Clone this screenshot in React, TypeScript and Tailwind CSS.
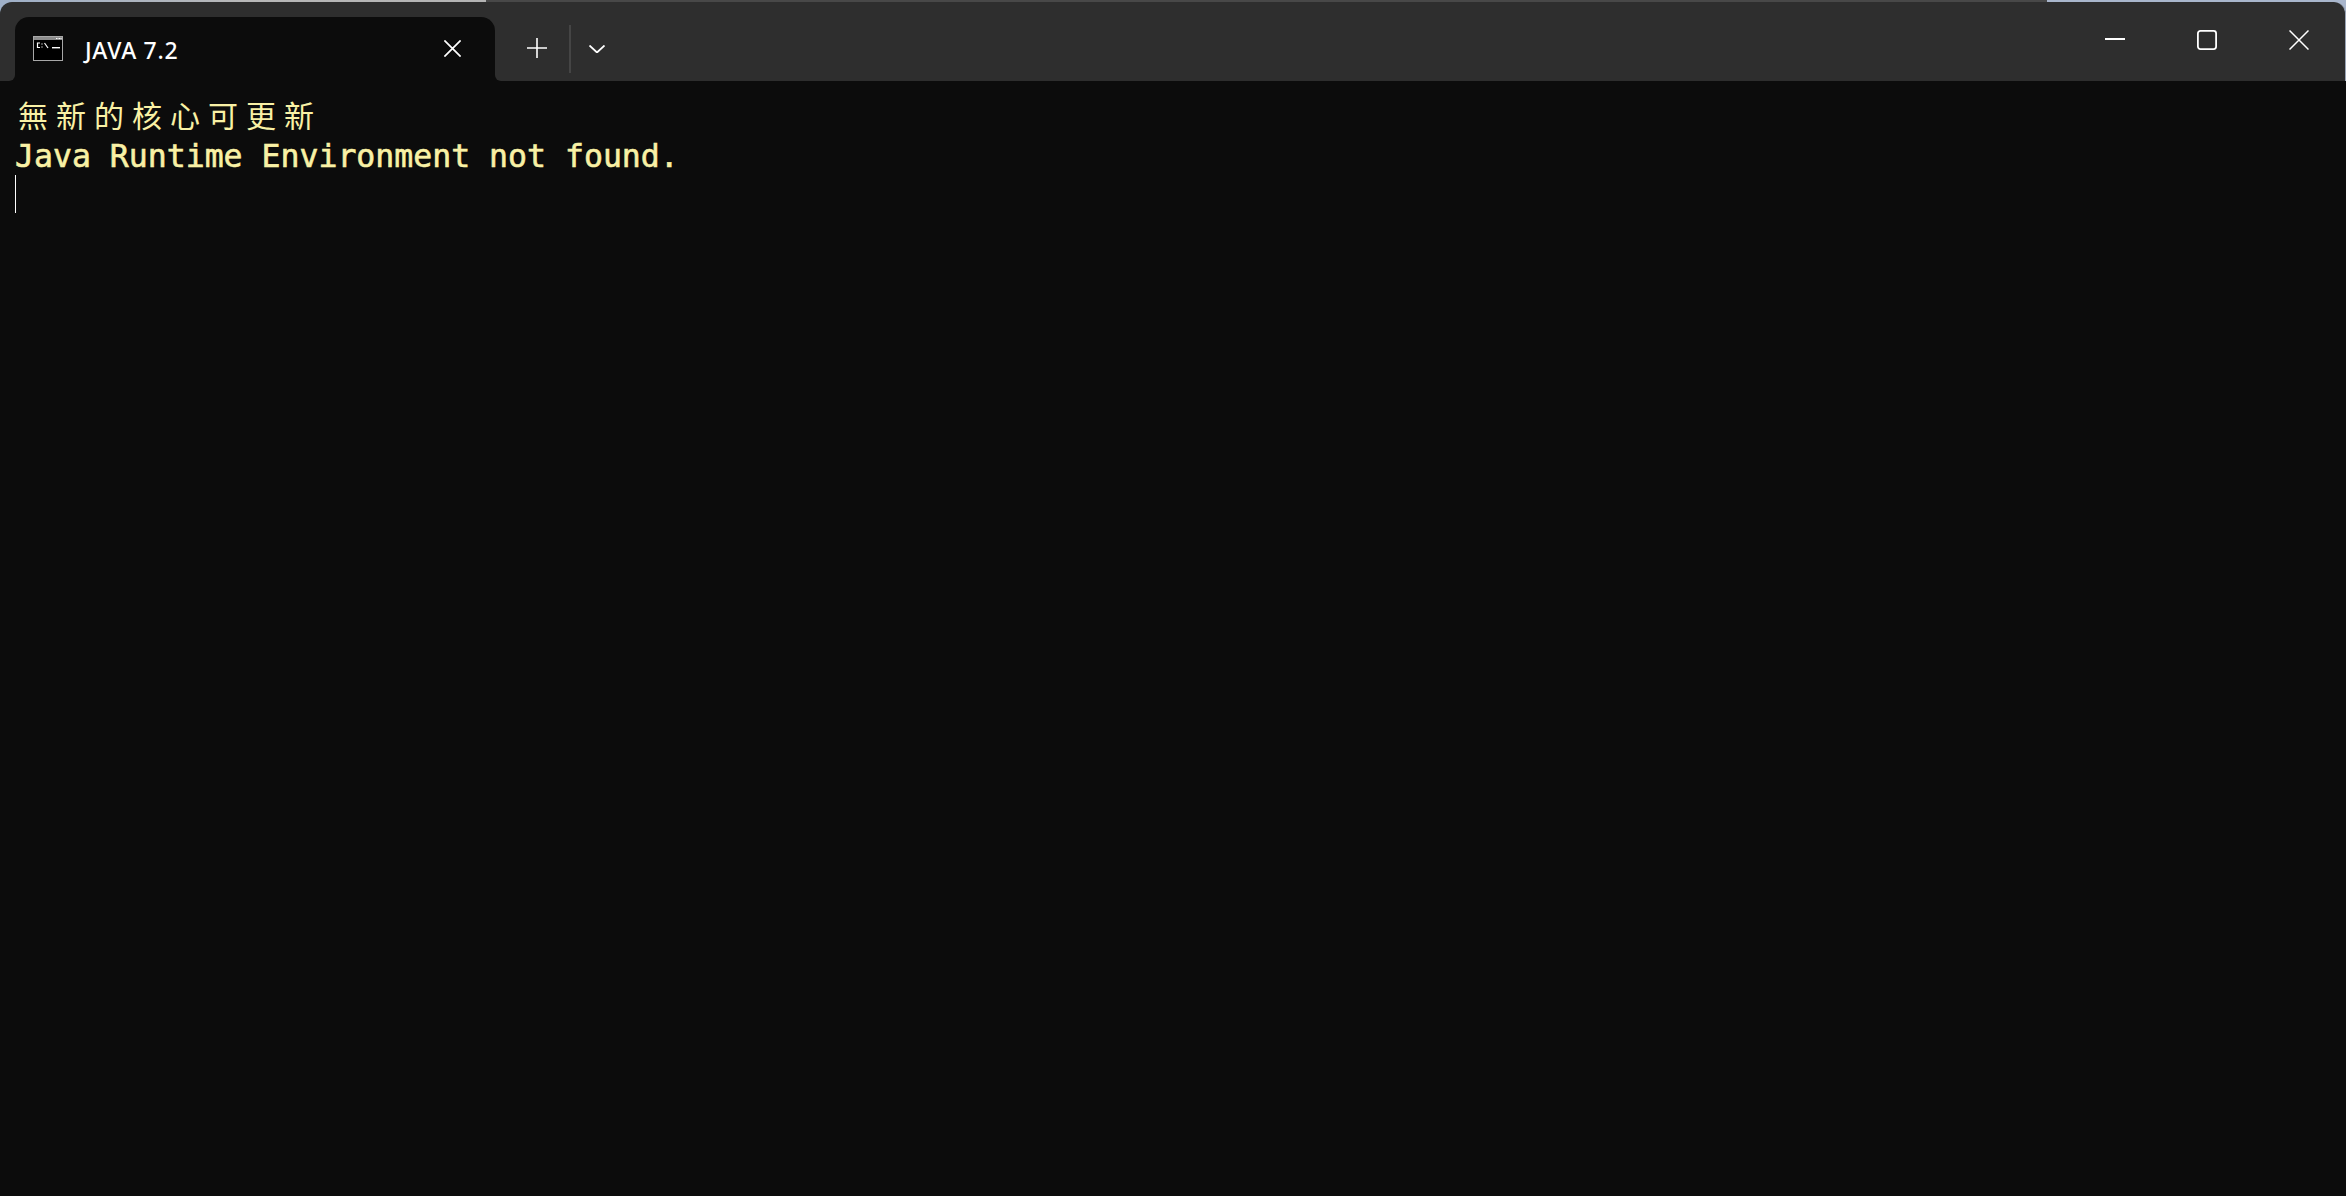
function ConsoleIcon() {
  return (
    <svg width="30" height="25" viewBox="0 0 30 25" className="shrink-0">
      <rect x="0.5" y="0.5" width="29" height="24" fill="#000" stroke="#a8a8a8" />
      <rect x="1" y="1" width="28" height="3" fill="#8c8c8c" />
      <path d="M23 2.5h1.5M25.5 2.5h1.5M27.5 2.5h1" stroke="#fff" strokeWidth="1" />
      <path d="M9 7.5v1M9 10.5v1" stroke="#fff" strokeWidth="1.2" />
      <path d="M7 7H4.5v4.5H7" fill="none" stroke="#fff" strokeWidth="1.2" />
      <path d="M11.5 7l3.5 5" fill="none" stroke="#fff" strokeWidth="1.2" />
      <rect x="19" y="11" width="8" height="1.4" fill="#fff" />
    </svg>
  );
}

function CloseIcon({ size, weight }: { size: number; weight: number }) {
  return (
    <svg width={size} height={size} viewBox="0 0 20 20" className="shrink-0">
      <path d="M0.5 0.5L19.5 19.5M19.5 0.5L0.5 19.5" stroke="#fff" strokeWidth={weight} fill="none" />
    </svg>
  );
}

export default function App() {
  return (
    <div className="h-screen w-full flex flex-col bg-[#0c0c0c] overflow-hidden">
      <div className="h-[2px] flex shrink-0">
        <div className="w-[486px] bg-gradient-to-r from-[#9fb0c8] via-[#b8b8b8] to-[#b4b4b4]" />
        <div className="flex-1 bg-[#484848]" />
        <div className="w-[299px] bg-[#a9b6cc]" />
      </div>
      <div className="h-[79px] flex shrink-0">
        <div className="w-[15px] bg-[linear-gradient(to_bottom,#9fb0c8_50%,#0c0c0c_50%)]">
          <div className="h-full bg-[#2e2e2e] rounded-br-[6px] rounded-tl-[12px]" />
        </div>
        <div className="w-[480px] flex flex-col bg-[#2e2e2e]">
          <div className="h-[15px]" />
          <div className="flex-1 flex items-start bg-[#0c0c0c] rounded-t-[14px] pl-[18px] pt-[19px]">
            <ConsoleIcon />
            <span className="ml-[22px] -mt-[2px] text-[23px] leading-[32px] tracking-[0.7px] text-white font-medium font-['Noto_Sans',sans-serif]">JAVA 7.2</span>
            <div className="ml-auto mr-[34px] mt-[4px]">
              <CloseIcon size={17} weight={2} />
            </div>
          </div>
        </div>
        <div className="flex-1 bg-[linear-gradient(to_bottom,#a9b6cc_50%,#0c0c0c_50%)]">
          <div className="h-full flex bg-[#2e2e2e] rounded-bl-[6px] rounded-tr-[12px] border-r border-[#9aa4b5]">
            <div className="flex items-start pl-[32px] pt-[23px]">
              <svg width="20" height="20" viewBox="0 0 20 20" className="mt-[13px]">
                <path d="M10 0v20M0 10h20" stroke="#fff" strokeWidth="1.6" fill="none" />
              </svg>
              <div className="w-[2px] h-[48px] bg-[#454545] ml-[22px]" />
              <svg width="16" height="8" viewBox="0 0 16 8" className="ml-[18px] mt-[20px]">
                <path d="M0.5 0.5L8 7.5L15.5 0.5" stroke="#fff" strokeWidth="1.8" fill="none" />
              </svg>
            </div>
            <div className="ml-auto flex items-start pt-[28px] pr-[36px] gap-[72px]">
              <svg width="20" height="20" viewBox="0 0 20 20">
                <path d="M0 9h20" stroke="#fff" strokeWidth="2" fill="none" />
              </svg>
              <svg width="20" height="20" viewBox="0 0 20 20">
                <rect x="0.9" y="0.9" width="18.2" height="18.2" rx="2.5" stroke="#fff" strokeWidth="1.8" fill="none" />
              </svg>
              <CloseIcon size={20} weight={1.5} />
            </div>
          </div>
        </div>
      </div>
      <div className="flex-1 pt-[13px] pl-[15px] text-[#f9f1a5] text-[31.5px] leading-[40px] font-['DejaVu_Sans_Mono',monospace]">
        <div className="pl-[3px] text-[30px] tracking-[8px] font-normal font-['Noto_Sans_CJK_TC',sans-serif]">無新的核心可更新</div>
        <div className="mt-[2px] h-[39px] whitespace-pre [-webkit-text-stroke:0.6px_#f9f1a5]">Java Runtime Environment not found.</div>
        <div className="w-px h-[38px] bg-white" />
      </div>
    </div>
  );
}
